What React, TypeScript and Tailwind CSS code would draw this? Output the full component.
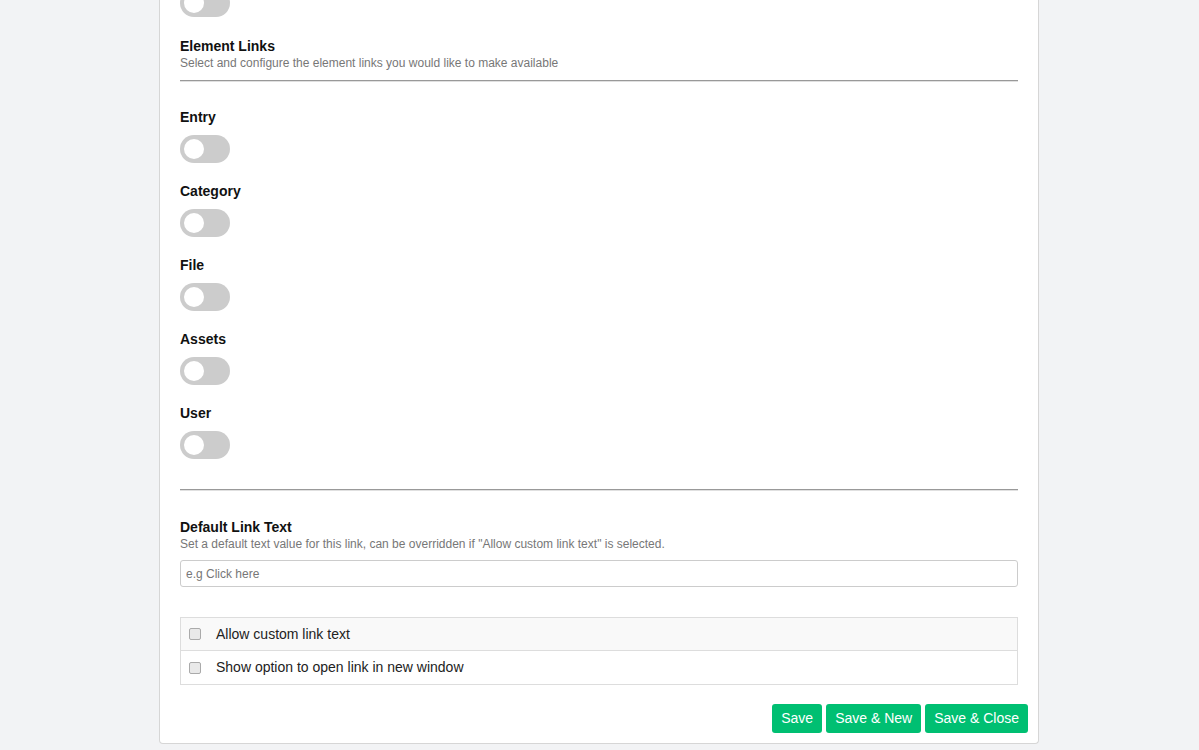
import React from 'react';

const sans = "font-['Liberation_Sans',Arial,sans-serif]";

function Toggle() {
    return (
        <div className="w-[50px] h-[28px] rounded-full bg-[#cccccc] flex items-center px-[4px]">
            <div className="w-[20px] h-[20px] rounded-full bg-white" />
        </div>
    );
}

function ToggleField({ label }: { label: string }) {
    return (
        <div className="flex flex-col gap-[8px]">
            <div className="text-[14px] leading-[20px] font-bold text-[#111]">{label}</div>
            <Toggle />
        </div>
    );
}

function CheckRow({ label, striped }: { label: string; striped?: boolean }) {
    return (
        <div className={`flex items-center h-[33px] px-[8px] gap-[15px] ${striped ? 'bg-[#f9f9f9]' : 'bg-white'}`}>
            <span className="w-[12px] h-[12px] rounded-[2px] border border-[#aaa] bg-[#e9e9e9]" />
            <span className="text-[14px] text-[#222]">{label}</span>
        </div>
    );
}

export default function App() {
    return (
        <div className={`min-h-[750px] bg-[#f2f3f5] ${sans} overflow-hidden`}>
            <div className="ml-[159px] w-[880px] -mt-[11px] bg-white border-x border-b border-[#d6d6d6] rounded-b-[4px] pl-[20px] pr-[10px] pb-[10px]">
                <div className="pr-[10px]">
                    <Toggle />

                    {/* Element Links */}
                    <div className="mt-[19px]">
                        <div className="text-[14px] leading-[20px] font-bold text-[#111]">Element Links</div>
                        <div className="text-[12px] leading-[15px] text-[#777]">
                            Select and configure the element links you would like to make available
                        </div>
                    </div>
                    <div className="mt-[9px] border-t border-[#999] border-b border-b-[#e0e0e0]" />

                    <div className="mt-[25px] flex flex-col gap-[18px]">
                        <ToggleField label="Entry" />
                        <ToggleField label="Category" />
                        <ToggleField label="File" />
                        <ToggleField label="Assets" />
                        <ToggleField label="User" />
                    </div>

                    <div className="mt-[30px] border-t border-[#999] border-b border-b-[#e0e0e0]" />

                    {/* Default link text */}
                    <div className="mt-[26px]">
                        <div className="text-[14px] leading-[20px] font-bold text-[#111]">Default Link Text</div>
                        <div className="text-[12px] leading-[15px] text-[#777]">
                            Set a default text value for this link, can be overridden if "Allow custom link text" is selected.
                        </div>
                    </div>
                    <input
                        className="mt-[8px] w-full h-[27px] border border-[#ccc] rounded-[3px] px-[5px] text-[12px] text-[#333] placeholder:text-[#777] outline-none"
                        placeholder="e.g Click here"
                    />

                    <div className="mt-[30px] border border-[#dddddd] divide-y divide-[#dddddd]">
                        <CheckRow label="Allow custom link text" striped />
                        <CheckRow label="Show option to open link in new window" />
                    </div>
                </div>

                <div className="mt-[19px] flex justify-end gap-[4px]">
                    <button className="h-[29px] px-[9px] rounded-[3px] bg-[#00bf72] text-white text-[14px]">Save</button>
                    <button className="h-[29px] px-[9px] rounded-[3px] bg-[#00bf72] text-white text-[14px]">Save &amp; New</button>
                    <button className="h-[29px] px-[9px] rounded-[3px] bg-[#00bf72] text-white text-[14px]">Save &amp; Close</button>
                </div>
            </div>
        </div>
    );
}
